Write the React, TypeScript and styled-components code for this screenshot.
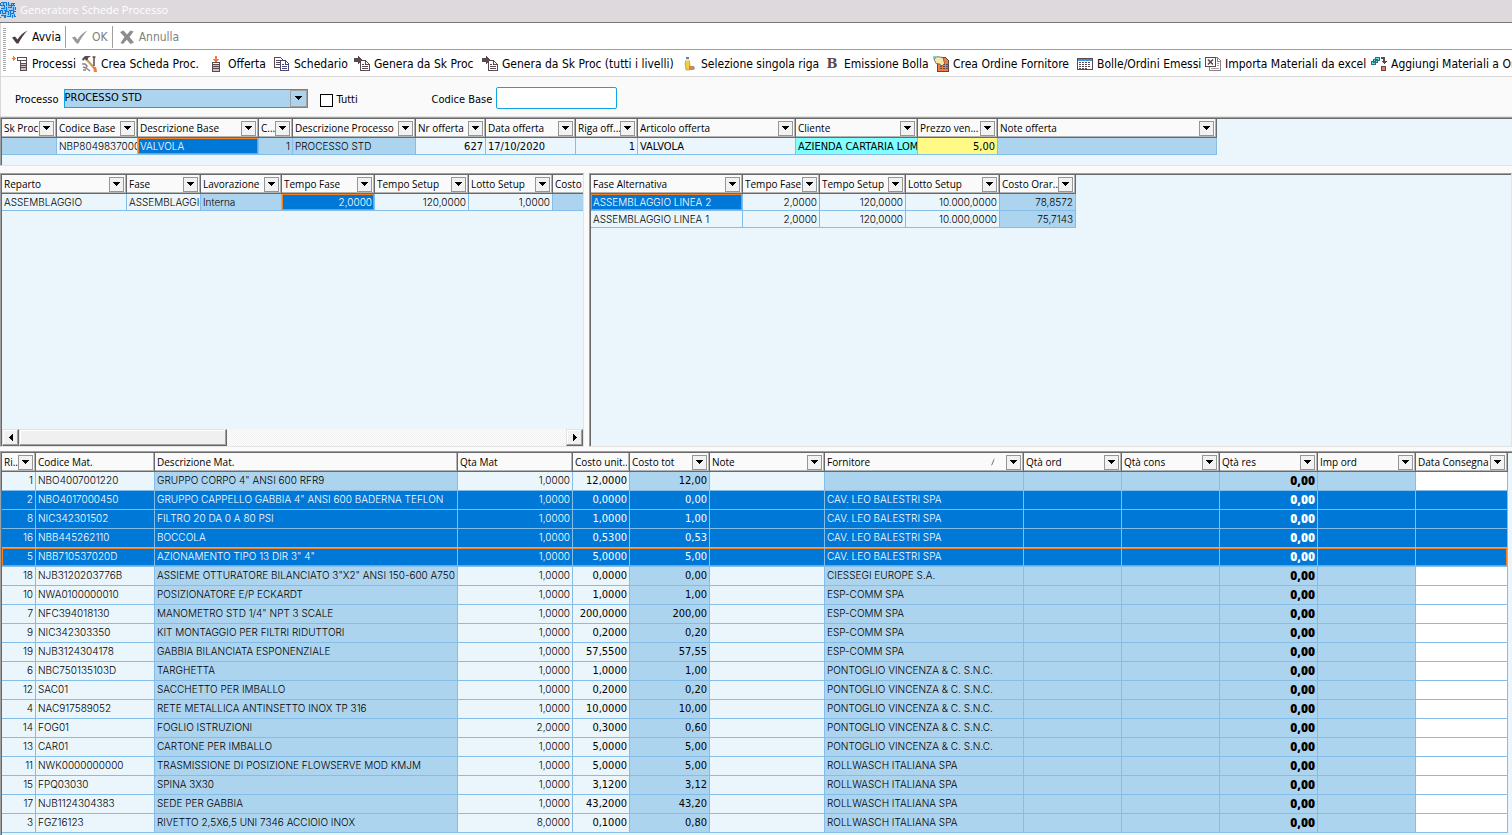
import React from "react";
import styled, { createGlobalStyle, css } from "styled-components";

const color = {
  frameOuter: "#a0a0a0",
  frameInner: "#696969",
  panel: "#fafafa",
  soft: "#e3e3e3",
  light: "#eaf5fc",
  mid: "#add4ef",
  line: "#84bde8",
  selected: "#0078d7",
  focus: "#f58220",
  ink: "#5a4a50",
};

const ui = `"DejaVu Sans Condensed", "Open Sans", sans-serif`;
const gridFont = `Inter, "Open Sans", sans-serif`;
const headFont = `"Open Sans", "Noto Sans", sans-serif`;

const GlobalStyle = createGlobalStyle`
  *, *::before, *::after { box-sizing: border-box; }
  body { margin: 0; background: ${color.panel}; color: #000; font-family: ${ui}; }
  button { font: inherit; color: inherit; }
`;

const Window = styled.div`
  display: flex;
  flex-direction: column;
  height: 100vh;
  min-height: 600px;
  overflow: hidden;
`;

/* ---------- title bar ---------- */

const TitleBar = styled.header`
  display: flex;
  flex: none;
  align-items: center;
  gap: 4px;
  height: 23px;
  padding-bottom: 3px;
  background: #ded9dd;
  border-bottom: 1px solid #777;
`;

const Title = styled.h1`
  margin: 0;
  font: 400 11px/16px ${headFont};
  color: #fff;
`;

/* ---------- toolbars ---------- */

const ToolArea = styled.div`
  display: flex;
  flex: none;
  background: #fff;
  border-bottom: 1px solid #d8d8d8;
  border-left: 1px solid #d8d8d8;
`;

const Grip = styled.div`
  flex: none;
  width: 3px;
  margin: 5px 2px 4px;
  background: repeating-linear-gradient(#a8a8a8 0 1px, #fff 1px 2px);
`;

const ToolRows = styled.div`
  flex: 1;
  min-width: 0;
`;

const ToolRow = styled.div`
  display: flex;
  align-items: center;
  height: 26px;
  padding: 2px 0 0 4px;
  overflow: hidden;
  & + & { border-top: 1px solid #a0a0a0; height: 27px; }
`;

const ToolButton = styled.button<{ $width?: number }>`
  display: flex;
  flex: none;
  align-items: center;
  gap: 4px;
  width: ${(p) => (p.$width ? `${p.$width}px` : "auto")};
  padding: 0;
  border: 0;
  background: none;
  font-size: 12px;
  line-height: 16px;
  white-space: nowrap;
  &:disabled { color: #808080; }
`;

const Divider = styled.span`
  flex: none;
  width: 1px;
  height: 22px;
  margin: 0 6px 0 4px;
  background: #a0a0a0;
`;

/* ---------- filters ---------- */

const Filters = styled.form`
  display: flex;
  flex: none;
  align-items: center;
  height: 40px;
  padding: 0 14px;
  background: ${color.panel};
  border-left: 1px solid #d8d8d8;
  border-bottom: 1px solid ${color.soft};
  font-size: 11px;
  line-height: 16px;
`;

const FieldLabel = styled.label`
  padding-top: 6px;
`;

const SelectBox = styled.span`
  display: flex;
  position: relative;
  width: 244px;
  margin: 3px 12px 0 5px;
`;

const Select = styled.select`
  appearance: none;
  width: 100%;
  height: 19px;
  padding: 0 20px 0 0;
  border: 1px solid #12a5e4;
  border-radius: 0;
  background: ${color.mid};
  font: 11px/16px ${ui};
  color: #000;
`;

const SelectArrow = styled.span`
  display: grid;
  place-items: center;
  position: absolute;
  top: 1px;
  right: 1px;
  width: 17px;
  height: 17px;
  border: 1px solid #a0a0a0;
  pointer-events: none;
`;

const CheckLabel = styled.label`
  display: flex;
  align-items: center;
  gap: 4px;
  width: 112px;
  padding-top: 7px;
`;

const CheckBox = styled.input`
  appearance: none;
  width: 13px;
  height: 13px;
  margin: 0;
  border: 1px solid #000;
  background: #fff;
`;

const TextBox = styled.input`
  width: 121px;
  height: 22px;
  margin: 2px 0 0 4px;
  border: 1px solid #12a5e4;
  border-radius: 2px;
  background: #fff;
`;

/* ---------- grids ---------- */

const Frame = styled.section`
  display: flex;
  flex-direction: column;
  min-width: 0;
  min-height: 0;
  overflow: hidden;
  background: ${color.light};
  border: 1px solid ${color.frameOuter};
  border-right-color: ${color.soft};
  border-bottom-color: ${color.soft};
  box-shadow: inset 1px 1px 0 ${color.frameInner};
  padding: 1px 0 0 1px;
`;

const OfferFrame = styled(Frame)`
  flex: none;
  height: 49px;
  border-right: 0;
`;

const Panes = styled.div`
  display: grid;
  flex: 274 1 0;
  grid-template-columns: minmax(0, 584fr) minmax(0, 923fr);
  gap: 5px;
  min-height: 0;
  margin: 7px 0 4px;
`;

const MaterialFrame = styled(Frame)`
  flex: 382 1 0;
  border-right: 0;
  border-bottom: 0;
`;

const GridArea = styled.div`
  flex: 1;
  min-height: 0;
  overflow: hidden;
`;

const Table = styled.table<{ $width: number }>`
  width: ${(p) => p.$width}px;
  table-layout: fixed;
  border-collapse: separate;
  border-spacing: 0;
  font: 300 10px/14px ${gridFont};
`;

const HeadCell = styled.th`
  height: 19px;
  padding: 0 2px;
  background: ${color.panel};
  border-right: 1px solid ${color.frameInner};
  border-bottom: 1px solid ${color.frameInner};
  box-shadow: inset -1px -1px 0 #b4b4b4;
  font: 400 10px/14px ${headFont};
  text-align: left;
`;

const HeadInner = styled.div`
  display: flex;
  align-items: center;
  height: 18px;
`;

const HeadText = styled.span`
  flex: 1;
  min-width: 0;
  overflow: hidden;
  white-space: nowrap;
`;

const FilterButton = styled.button`
  display: grid;
  flex: none;
  place-items: center;
  width: 15px;
  height: 15px;
  padding: 0;
  background: #f2f2f2;
  border: 1px solid #969696;
`;

const SortMark = styled.svg`
  flex: none;
  margin-right: 8px;
`;

type Tone = "light" | "mid" | "white" | "cyan" | "yellow" | "selected";
type Face = "thin" | "ui" | "bold";

const fills: Record<Tone, string> = {
  light: color.light,
  mid: color.mid,
  white: "#fff",
  cyan: "#80ffff",
  yellow: "#fffa85",
  selected: color.selected,
};

const faces: Record<Face, ReturnType<typeof css>> = {
  thin: css``,
  ui: css`font-family: ${ui}; font-weight: 400; font-size: 11px; padding-top: 2px;`,
  bold: css`font-family: ${headFont}; font-weight: 800; font-size: 12px;`,
};

const Cell = styled.td<{ $tone: Tone; $face: Face; $right?: boolean; $tall?: boolean; $focus?: boolean }>`
  height: ${(p) => (p.$tall ? 19 : 17)}px;
  padding: 0 2px;
  overflow: hidden;
  white-space: nowrap;
  background: ${(p) => fills[p.$tone]};
  color: ${(p) => (p.$tone === "selected" ? "#fff" : "#000")};
  border-right: 1px solid ${color.line};
  border-bottom: 1px solid ${color.line};
  text-align: ${(p) => (p.$right ? "right" : "left")};
  ${(p) => faces[p.$face]}
  ${(p) => p.$tall && p.$face !== "bold" && css`padding-bottom: 2px;`}
  ${(p) => p.$focus && css`box-shadow: inset 0 0 0 1px ${color.focus};`}
`;

const Row = styled.tr<{ $focus?: boolean }>`
  ${(p) =>
    p.$focus &&
    css`
      & > td { box-shadow: inset 0 1px 0 ${color.focus}, inset 0 -1px 0 ${color.focus}; }
      & > td:first-child { box-shadow: inset 1px 1px 0 ${color.focus}, inset 0 -1px 0 ${color.focus}; }
      & > td:last-child { box-shadow: inset -1px -1px 0 ${color.focus}, inset 0 1px 0 ${color.focus}; }
    `}
`;

/* ---------- scroll bar ---------- */

const ScrollBar = styled.div`
  display: flex;
  flex: none;
  height: 17px;
  background: repeating-conic-gradient(#efefef 0 25%, #fff 0 50%) 0 0 / 2px 2px;
`;

const raised = css`
  background: #f0f0f0;
  border: 1px solid #e3e3e3;
  border-right-color: ${color.frameInner};
  border-bottom-color: ${color.frameInner};
  box-shadow: inset -1px -1px 0 #a0a0a0, inset 1px 1px 0 #fff;
`;

const ScrollButton = styled.button`
  display: grid;
  place-items: center;
  flex: none;
  width: 17px;
  padding: 0;
  ${raised}
`;

const Thumb = styled.div`
  flex: 0 0 38%;
  ${raised}
`;

const Track = styled.div`
  display: flex;
  flex: 1;
`;

/* ---------- icons ---------- */

const Icon = styled.svg.attrs({ width: 16, height: 16, viewBox: "0 0 16 16", "aria-hidden": true })`
  flex: none;
  display: block;
`;

const PixelIcon = styled(Icon).attrs({ shapeRendering: "crispEdges" })``;

const Down = () => (
  <svg width="7" height="4" viewBox="0 0 7 4" shapeRendering="crispEdges" aria-hidden="true">
    <path d="M0 0h7v1H6v1H5v1H4v1H3V3H2V2H1V1H0z" />
  </svg>
);

const Side = ({ right }: { right?: boolean }) => (
  <svg width="4" height="7" viewBox="0 0 4 7" shapeRendering="crispEdges" aria-hidden="true">
    <path d={right ? "M0 0h1v1h1v1h1v1h1v1H3v1H2v1H1v1H0z" : "M4 0H3v1H2v1H1v1H0v1h1v1h1v1h1v1h1z"} />
  </svg>
);

const AppIcon = () => (
  <PixelIcon>
    <path fill="#9cc6ea" d="M1 1h14v14H1z" />
    <path
      fill="none"
      stroke="#1279d6"
      d="M1 .5h5v3M8.500 0v3h3V1H15M0 3.500h4v3H1M6.500 5v3h-3M8 5.500h3v-2h4M13.500 5v3H9M0 8.500h2v3h3v-2h3v3M10.500 9v2h3v-2H16M1 13.500h3V16M5.500 13v3M7 14.500h3.500V12M12.500 13v3M14.500 12v2H16M.5 15v1M15.500 5v3M.5 1v2M3.500 1v2M13.500 1v2M.5 9v3"
    />
  </PixelIcon>
);

const Check = ({ fill }: { fill: string }) => (
  <Icon>
    <path fill={fill} d="M0 8.500 3 7.500 5.500 10.500C8 6.500 11 3.500 15.500 1.500 12 5 9 9.500 6.500 14.500H4.500Z" />
  </Icon>
);

const Cross = () => (
  <Icon>
    <path fill="#8c8c8c" d="M1 3 4.500 1.500 8 5.500 11.500 1.500 14.500 2.500 10.500 8 15 13.500 11.500 15 7.800 10.700 4 15 1.500 14 5.500 8Z" />
  </Icon>
);

const ProcessIcon = () => (
  <PixelIcon>
    <path fill="#f47b3a" d="M0 2h1V0h1v1h1v1h1v1H3v1H2v1H1V3H0z" />
    <path fill="none" stroke={color.ink} d="M5 1.500h9.500v3H5M5.500 2v3M8.500 5v9.500h6V5M9 7.500h5M9 9.500h5M9 11.500h5" />
    <path fill="#c8c4c6" d="M9 8h5v1H9zM9 10h5v1H9zM9 12h5v2H9z" />
  </PixelIcon>
);

const ToolsIcon = () => (
  <Icon>
    <path fill={color.ink} d="M1 3 4 0h6L7 2v2L5 5 4 3 2 5Z" />
    <path fill="none" stroke="#c79a58" strokeWidth="2" d="m6 4 9 10" />
    <path fill="#f47b3a" d="M12 11h3l1 5h-3Z" />
    <path fill="none" stroke={color.ink} strokeWidth="1.500" d="M13 1v9M11.500 1h3" />
    <path fill="none" stroke="#8c8488" strokeWidth="1.500" d="M1 8h3l2 2-1 2-3-1M5 12l4 3M2 14h3" />
  </Icon>
);

const OfferIcon = () => (
  <PixelIcon>
    <path fill="#f47b3a" d="M7 0h2v3h2v1h-1v1H9v1H7V5H6V4H5V3h2z" />
    <path fill="none" stroke={color.ink} d="M4.500 6.500h7v9h-7zM5 8.500h6M5 10.500h6M5 12.500h6" />
    <path fill="#c8c4c6" d="M5 9h6v1H5zM5 11h6v1H5zM5 13h6v2H5z" />
  </PixelIcon>
);

const CopyIcon = () => (
  <PixelIcon>
    <path fill="#fff" stroke={color.ink} d="M.5 1.500h6l2 2v8h-8zM2 4.500h4M2 6.500h5M2 8.500h5" />
    <path fill="#fff" stroke="#4b4676" d="M6.500 4.500h5l3 3v7h-8zM11.500 5v3H14M8 8.500h2M8 10.500h5M8 12.500h5" />
  </PixelIcon>
);

const SendIcon = () => (
  <PixelIcon>
    <path fill="#fff" stroke={color.ink} d="M6.500 4.500h5l4 4v6h-9zM11.500 5v3H15M8 8.500h2M8 10.500h6M8 12.500h6" />
    <path fill={color.ink} d="M0 2h4V0h1v1h1v1h1v1h1v2H7v1H6v1H5v1H4V6H0z" />
  </PixelIcon>
);

const PersonIcon = () => (
  <Icon>
    <path fill="#9c9498" d="M9 10h4l1 3-2 1H9Z" />
    <path fill="#f2cf3a" stroke="#8d7436" strokeWidth=".5" d="M5 4h3l1 5v5H5L4 8Z" />
    <path fill="#6f7fa8" d="M5 1h3v2H5Z" />
    <path fill="#f7e6a0" d="M5 3h3v2H5Z" />
    <path fill="#f47b3a" d="M8 10h2l2 4H8Z" />
  </Icon>
);

const LetterB = styled.span`
  flex: none;
  width: 16px;
  font: 700 13px/14px "DejaVu Serif", serif;
  text-align: center;
  color: ${color.ink};
`;

const OrderIcon = () => (
  <PixelIcon>
    <path fill="#f47b3a" stroke={color.ink} d="M4.500 1.500h8l3 3v11h-11z" />
    <path stroke={color.ink} strokeDasharray="2 1" d="M7 8.500h8M7 10.500h8M7 12.500h8" />
    <path fill="#5be3e8" d="M0 0h3v3H0z" />
    <path fill="#f6e7a6" stroke={color.ink} strokeWidth=".7" shapeRendering="auto" d="M1 3 4 .6 10 1.500l1.500 6L9 10 6.500 8 3 7.500Z" />
  </PixelIcon>
);

const CalendarIcon = () => (
  <PixelIcon>
    <path fill="#fff" stroke={color.ink} d="M.5 2.500h15v11H.5z" />
    <path fill="#3f8fe0" d="M1 3h14v2H1z" />
    <path stroke={color.ink} strokeDasharray="2 1" d="M2 6.500h12M2 8.500h12M2 10.500h12M2 12.500h9" />
  </PixelIcon>
);

const ExcelIcon = () => (
  <PixelIcon>
    <path fill="#fff" stroke="#8c8488" d="M4.500 1.500h8l3 3v10h-11zM12.500 2v3H15" />
    <path stroke="#a9a4a7" d="M12 7.500h2M12 9.500h2M6 12.500h8" />
    <path fill="#fff" stroke={color.ink} d="M.5 1.500h10v9H.5z" />
    <path fill="none" stroke={color.ink} strokeWidth="1.600" shapeRendering="auto" d="m3 3.500 5 5M8 3.500l-5 5" />
  </PixelIcon>
);

const AddIcon = () => (
  <PixelIcon>
    <path fill="#5be3e8" stroke="#2f6d78" d="M4.500 1.500h4v3h-4zM2.500 3.500h4v3h-4zM.5 5.500h4v3h-4z" />
    <path fill={color.ink} d="M10 1h4v4h2v1h-1v1h-1v1h-1V7h-1V6h-1V5h1V3h-2z" />
    <path fill="#f47b3a" stroke={color.ink} d="M10.500 10.500h4v4h-4z" />
  </PixelIcon>
);

/* ---------- data ---------- */

const tools: { label: string; width?: number; icon: React.ReactNode }[] = [
  { label: "Processi", width: 69, icon: <ProcessIcon /> },
  { label: "Crea Scheda Proc.", width: 127, icon: <ToolsIcon /> },
  { label: "Offerta", width: 66, icon: <OfferIcon /> },
  { label: "Schedario", width: 80, icon: <CopyIcon /> },
  { label: "Genera da Sk Proc", width: 128, icon: <SendIcon /> },
  { label: "Genera da Sk Proc (tutti i livelli)", width: 199, icon: <SendIcon /> },
  { label: "Selezione singola riga", width: 143, icon: <PersonIcon /> },
  { label: "Emissione Bolla", width: 109, icon: <LetterB aria-hidden="true">B</LetterB> },
  { label: "Crea Ordine Fornitore", width: 144, icon: <OrderIcon /> },
  { label: "Bolle/Ordini Emessi", width: 128, icon: <CalendarIcon /> },
  { label: "Importa Materiali da excel", width: 166, icon: <ExcelIcon /> },
  { label: "Aggiungi Materiali a Ordine", icon: <AddIcon /> },
];

type Column = {
  title: string;
  width: number;
  tone?: Tone;
  face?: Face;
  right?: boolean;
  filter?: boolean;
  sorted?: boolean;
};

const offerColumns: Column[] = [
  { title: "Sk Proc", width: 55, tone: "mid" },
  { title: "Codice Base", width: 81 },
  { title: "Descrizione Base", width: 121 },
  { title: "C...", width: 34, tone: "mid", right: true },
  { title: "Descrizione Processo", width: 123, tone: "mid" },
  { title: "Nr offerta", width: 70, face: "ui", right: true },
  { title: "Data offerta", width: 90, face: "ui" },
  { title: "Riga off...", width: 62, face: "ui", right: true },
  { title: "Articolo offerta", width: 158, face: "ui" },
  { title: "Cliente", width: 122, tone: "cyan", face: "ui" },
  { title: "Prezzo ven...", width: 80, tone: "yellow", face: "ui", right: true },
  { title: "Note offerta", width: 219, tone: "mid" },
];

const offerRows = [
  ["", "NBP8049837000", "VALVOLA", "1", "PROCESSO STD", "627", "17/10/2020", "1", "VALVOLA", "AZIENDA CARTARIA LOMBARDA", "5,00", ""],
];

const phaseColumns: Column[] = [
  { title: "Reparto", width: 125 },
  { title: "Fase", width: 74 },
  { title: "Lavorazione", width: 81, tone: "mid" },
  { title: "Tempo Fase", width: 93, right: true },
  { title: "Tempo Setup", width: 94, right: true },
  { title: "Lotto Setup", width: 84, right: true },
  { title: "Costo Orario", width: 90, tone: "mid", right: true },
];

const phaseRows = [["ASSEMBLAGGIO", "ASSEMBLAGGIO", "Interna", "2,0000", "120,0000", "1,0000", ""]];

const altColumns: Column[] = [
  { title: "Fase Alternativa", width: 152 },
  { title: "Tempo Fase", width: 77, right: true },
  { title: "Tempo Setup", width: 86, right: true },
  { title: "Lotto Setup", width: 94, right: true },
  { title: "Costo Orar...", width: 76, tone: "mid", right: true },
];

const altRows = [
  ["ASSEMBLAGGIO LINEA 2", "2,0000", "120,0000", "10.000,0000", "78,8572"],
  ["ASSEMBLAGGIO LINEA 1", "2,0000", "120,0000", "10.000,0000", "75,7143"],
];

const materialColumns: Column[] = [
  { title: "Ri...", width: 34, right: true },
  { title: "Codice Mat.", width: 119, filter: false },
  { title: "Descrizione Mat.", width: 303, tone: "mid", filter: false },
  { title: "Qta Mat", width: 115, right: true, filter: false },
  { title: "Costo unit...", width: 57, face: "ui", right: true, filter: false },
  { title: "Costo tot", width: 80, tone: "mid", face: "ui", right: true },
  { title: "Note", width: 115 },
  { title: "Fornitore", width: 199, tone: "mid", sorted: true },
  { title: "Qtà ord", width: 98, tone: "mid" },
  { title: "Qtà cons", width: 98, tone: "mid" },
  { title: "Qtà res", width: 98, tone: "mid", face: "bold", right: true },
  { title: "Imp ord", width: 98, tone: "mid" },
  { title: "Data Consegna", width: 92, tone: "white" },
];

const material = (n: string, code: string, text: string, qty: string, unit: string, total: string, supplier: string) => [
  n, code, text, qty, unit, total, "", supplier, "", "", "0,00", "", "",
];

const materialRows = [
  material("1", "NBO4007001220", 'GRUPPO CORPO 4" ANSI 600 RFR9', "1,0000", "12,0000", "12,00", ""),
  material("2", "NBO4017000450", 'GRUPPO CAPPELLO GABBIA 4" ANSI 600 BADERNA TEFLON', "1,0000", "0,0000", "0,00", "CAV. LEO BALESTRI SPA"),
  material("8", "NIC342301502", "FILTRO 20 DA 0 A 80 PSI", "1,0000", "1,0000", "1,00", "CAV. LEO BALESTRI SPA"),
  material("16", "NBB445262110", "BOCCOLA", "1,0000", "0,5300", "0,53", "CAV. LEO BALESTRI SPA"),
  material("5", "NBB710537020D", 'AZIONAMENTO TIPO 13 DIR 3" 4"', "1,0000", "5,0000", "5,00", "CAV. LEO BALESTRI SPA"),
  material("18", "NJB3120203776B", 'ASSIEME OTTURATORE BILANCIATO 3"X2" ANSI 150-600 A750', "1,0000", "0,0000", "0,00", "CIESSEGI EUROPE S.A."),
  material("10", "NWA0100000010", "POSIZIONATORE E/P ECKARDT", "1,0000", "1,0000", "1,00", "ESP-COMM SPA"),
  material("7", "NFC394018130", 'MANOMETRO STD 1/4" NPT 3 SCALE', "1,0000", "200,0000", "200,00", "ESP-COMM SPA"),
  material("9", "NIC342303350", "KIT MONTAGGIO PER FILTRI RIDUTTORI", "1,0000", "0,2000", "0,20", "ESP-COMM SPA"),
  material("19", "NJB3124304178", "GABBIA BILANCIATA ESPONENZIALE", "1,0000", "57,5500", "57,55", "ESP-COMM SPA"),
  material("6", "NBC750135103D", "TARGHETTA", "1,0000", "1,0000", "1,00", "PONTOGLIO VINCENZA & C. S.N.C."),
  material("12", "SAC01", "SACCHETTO PER IMBALLO", "1,0000", "0,2000", "0,20", "PONTOGLIO VINCENZA & C. S.N.C."),
  material("4", "NAC917589052", "RETE METALLICA ANTINSETTO INOX TP 316", "1,0000", "10,0000", "10,00", "PONTOGLIO VINCENZA & C. S.N.C."),
  material("14", "FOG01", "FOGLIO ISTRUZIONI", "2,0000", "0,3000", "0,60", "PONTOGLIO VINCENZA & C. S.N.C."),
  material("13", "CAR01", "CARTONE PER IMBALLO", "1,0000", "5,0000", "5,00", "PONTOGLIO VINCENZA & C. S.N.C."),
  material("11", "NWK0000000000", "TRASMISSIONE DI POSIZIONE FLOWSERVE MOD KMJM", "1,0000", "5,0000", "5,00", "ROLLWASCH ITALIANA SPA"),
  material("15", "FPQ03030", "SPINA 3X30", "1,0000", "3,1200", "3,12", "ROLLWASCH ITALIANA SPA"),
  material("17", "NJB1124304383", "SEDE PER GABBIA", "1,0000", "43,2000", "43,20", "ROLLWASCH ITALIANA SPA"),
  material("3", "FGZ16123", "RIVETTO 2,5X6,5 UNI 7346 ACCIOIO INOX", "8,0000", "0,1000", "0,80", "ROLLWASCH ITALIANA SPA"),
];

type DataGridProps = {
  label: string;
  columns: Column[];
  rows: string[][];
  focusCell?: [number, number];
  selectedRows?: number[];
  focusRow?: number;
  tall?: boolean;
};

function DataGrid({ label, columns, rows, focusCell, selectedRows = [], focusRow, tall }: DataGridProps) {
  return (
    <Table $width={columns.reduce((sum, c) => sum + c.width, 0)} aria-label={label}>
      <colgroup>
        {columns.map((c) => (
          <col key={c.title} width={c.width} />
        ))}
      </colgroup>
      <thead>
        <tr>
          {columns.map((c) => (
            <HeadCell key={c.title} scope="col">
              <HeadInner>
                <HeadText>{c.title}</HeadText>
                {c.sorted && (
                  <SortMark width="7" height="8" viewBox="0 0 7 8" aria-hidden="true">
                    <path d="M.5 7.500 3.500.5" fill="none" stroke="#707070" />
                    <path d="M3.500.5 6.500 7.500H.5" fill="none" stroke="#fff" />
                  </SortMark>
                )}
                {c.filter !== false && (
                  <FilterButton type="button" aria-label={`Filtra ${c.title}`}>
                    <Down />
                  </FilterButton>
                )}
              </HeadInner>
            </HeadCell>
          ))}
        </tr>
      </thead>
      <tbody>
        {rows.map((row, r) => (
          <Row key={r} $focus={r === focusRow}>
            {row.map((value, i) => {
              const col = columns[i];
              const focused = !!focusCell && focusCell[0] === r && focusCell[1] === i;
              return (
                <Cell
                  key={i}
                  $tone={focused || selectedRows.includes(r) ? "selected" : col.tone ?? "light"}
                  $face={col.face ?? "thin"}
                  $right={col.right}
                  $tall={tall}
                  $focus={focused}
                >
                  {value}
                </Cell>
              );
            })}
          </Row>
        ))}
      </tbody>
    </Table>
  );
}

export default function App() {
  return (
    <Window>
      <GlobalStyle />
      <TitleBar>
        <AppIcon />
        <Title>Generatore Schede Processo</Title>
      </TitleBar>

      <ToolArea>
        <Grip />
        <ToolRows>
          <ToolRow role="toolbar" aria-label="Comandi">
            <ToolButton type="button"><Check fill="#4b3f46" />Avvia</ToolButton>
            <Divider />
            <ToolButton type="button" disabled><Check fill="#9a9a9a" />OK</ToolButton>
            <Divider />
            <ToolButton type="button" disabled><Cross />Annulla</ToolButton>
          </ToolRow>
          <ToolRow role="toolbar" aria-label="Schede processo">
            {tools.map((t) => (
              <ToolButton key={t.label} type="button" $width={t.width}>
                {t.icon}
                {t.label}
              </ToolButton>
            ))}
          </ToolRow>
        </ToolRows>
      </ToolArea>

      <Filters>
        <FieldLabel htmlFor="process">Processo</FieldLabel>
        <SelectBox>
          <Select id="process" defaultValue="std">
            <option value="std">PROCESSO STD</option>
          </Select>
          <SelectArrow><Down /></SelectArrow>
        </SelectBox>
        <CheckLabel>
          <CheckBox type="checkbox" />
          Tutti
        </CheckLabel>
        <FieldLabel htmlFor="base">Codice Base</FieldLabel>
        <TextBox id="base" type="text" />
      </Filters>

      <OfferFrame>
        <DataGrid label="Offerte" columns={offerColumns} rows={offerRows} focusCell={[0, 2]} />
      </OfferFrame>

      <Panes>
        <Frame>
          <GridArea>
            <DataGrid label="Fasi" columns={phaseColumns} rows={phaseRows} focusCell={[0, 3]} />
          </GridArea>
          <ScrollBar>
            <ScrollButton type="button" aria-label="Scorri a sinistra"><Side /></ScrollButton>
            <Track><Thumb /></Track>
            <ScrollButton type="button" aria-label="Scorri a destra"><Side right /></ScrollButton>
          </ScrollBar>
        </Frame>
        <Frame>
          <DataGrid label="Fasi alternative" columns={altColumns} rows={altRows} focusCell={[0, 0]} />
        </Frame>
      </Panes>

      <MaterialFrame>
        <DataGrid label="Materiali" columns={materialColumns} rows={materialRows} selectedRows={[1, 2, 3, 4]} focusRow={4} tall />
      </MaterialFrame>
    </Window>
  );
}
